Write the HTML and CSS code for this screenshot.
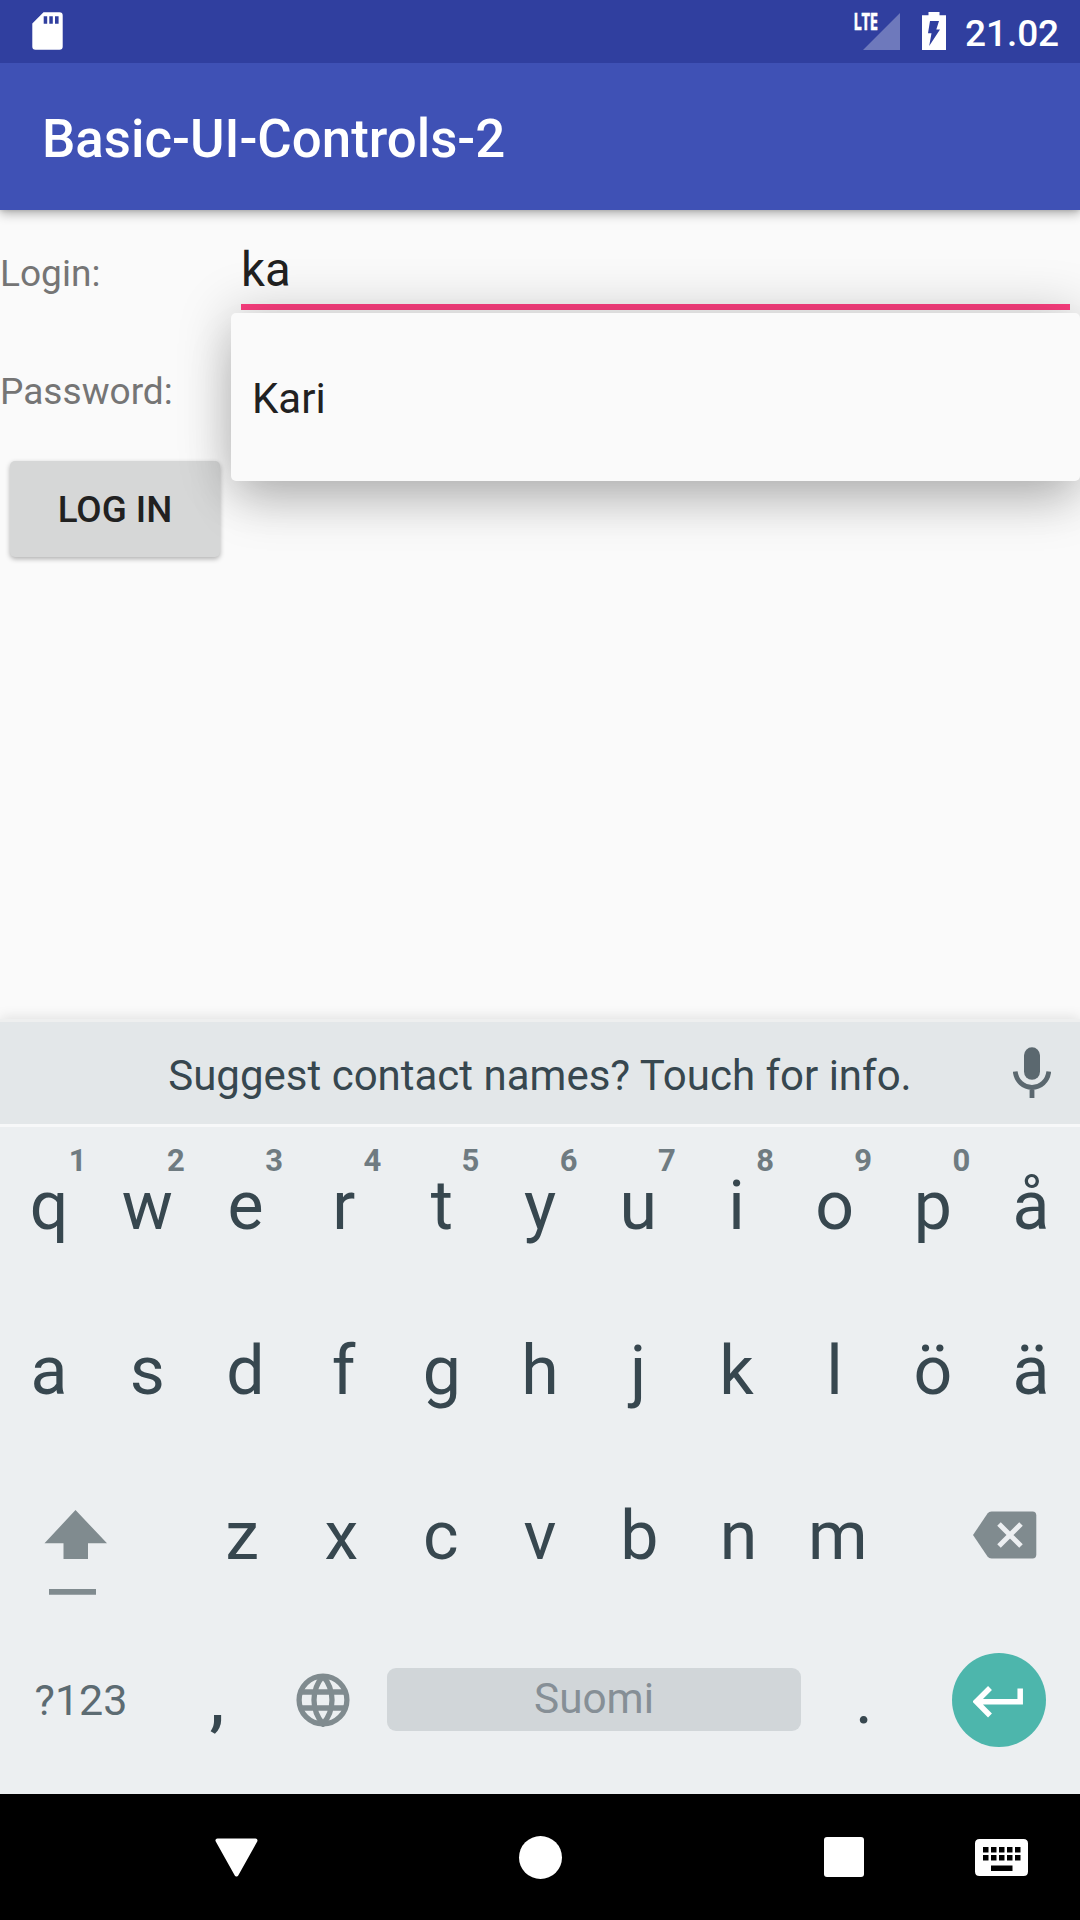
FILE: index.html
```html
<!DOCTYPE html>
<html lang="fi">
<head>
<meta charset="utf-8">
<title>Basic-UI-Controls-2</title>
<link rel="stylesheet" href="styles.css">
</head>
<body>
<div class="screen">
  <header class="status-bar">
    <svg class="sd-icon" width="31" height="38" viewBox="0 0 31 38"><path fill="#fff" fill-rule="evenodd" d="M11.500 .3H27.500a3.200 3.200 0 0 1 3.200 3.200V34.500a3.200 3.200 0 0 1-3.200 3.200H3.500a3.200 3.200 0 0 1-3.200-3.200V11.500ZM11.700 4.200V11.800H15.200V4.200ZM17.300 4.200V11.800H20.800V4.200ZM23 4.200V11.800H26.600V4.200Z"/></svg>
    <div class="status-right">
      <div class="signal">
        <svg width="37" height="37" viewBox="0 0 37 37"><path fill="#fff" fill-opacity=".3" d="M37 0V37H0Z"/></svg>
        <span class="lte">LTE</span>
      </div>
      <svg class="battery" width="24" height="38" viewBox="0 0 24 38"><path fill="#fff" fill-rule="evenodd" d="M6.500 0H17.500V3.200H24V38H0V3.200H6.500ZM8 9H17L14.300 17.500H18L7.200 34L9.500 21.300H6Z"/></svg>
      <span class="clock">21.02</span>
    </div>
  </header>
  <div class="app-bar"><h1 class="title">Basic-UI-Controls-2</h1></div>
  <main class="content">
    <div class="form-row">
      <label class="label">Login:</label>
      <div class="input">ka</div>
      <div class="dropdown">Kari</div>
    </div>
    <div class="form-row"><label class="label">Password:</label></div>
    <button class="login-button">LOG IN</button>
  </main>
  <section class="ime">
    <div class="suggestions">
      <span class="suggestion">Suggest contact names? Touch for info.</span>
      <svg class="mic" width="38" height="52" viewBox="0 0 38 52"><rect x="11" y=".3" width="16" height="32.500" rx="8" fill="#5b686f"/><path d="M2.200 24.500c1.300 10 8.300 15.800 16.800 15.800S34.500 34.500 35.800 24.500M19 40V51" fill="none" stroke="#5b686f" stroke-width="4.800"/></svg>
    </div>
    <div class="keyboard">
      <div class="row row-first">
        <span class="key">q<sup class="hint">1</sup></span><span class="key">w<sup class="hint">2</sup></span><span class="key">e<sup class="hint">3</sup></span><span class="key">r<sup class="hint">4</sup></span><span class="key">t<sup class="hint">5</sup></span><span class="key">y<sup class="hint">6</sup></span><span class="key">u<sup class="hint">7</sup></span><span class="key">i<sup class="hint">8</sup></span><span class="key">o<sup class="hint">9</sup></span><span class="key">p<sup class="hint">0</sup></span><span class="key">å</span>
      </div>
      <div class="row">
        <span class="key">a</span><span class="key">s</span><span class="key">d</span><span class="key">f</span><span class="key">g</span><span class="key">h</span><span class="key">j</span><span class="key">k</span><span class="key">l</span><span class="key">ö</span><span class="key">ä</span>
      </div>
      <div class="row row-third">
        <span class="shift"><svg width="64" height="86" viewBox="0 0 64 86"><path fill="#808b8f" d="M31.500 0L63 33.300H44V49H19.500V33.300H.500ZM5 79H52V84.800H5Z"/></svg></span>
        <span class="key">z</span><span class="key">x</span><span class="key">c</span><span class="key">v</span><span class="key">b</span><span class="key">n</span><span class="key">m</span>
        <span class="backspace"><svg width="64" height="48" viewBox="0 0 64 48"><path fill="#808b8f" d="M0 24L14.500 2.500Q16 .5 18.500 .5H59.500Q63.300 .5 63.300 4.500V43.500Q63.300 47.500 59.500 47.500H18.500Q16 47.500 14.500 45.500Z"/><path d="M26 13L48 35M48 13L26 35" stroke="#eceff1" stroke-width="5"/></svg></span>
      </div>
      <div class="row row-last">
        <span class="key symbols">?123</span>
        <span class="key comma">,</span>
        <span class="globe"><svg width="54" height="54" viewBox="0 0 54 54" fill="none" stroke="#808b8f" stroke-width="5.300"><circle cx="27" cy="27" r="23.900"/><path d="M5 19H49M5 35H49M27 3C15 17 15 37 27 51C39 37 39 17 27 3"/></svg></span>
        <span class="space">Suomi</span>
        <span class="key period">.</span>
        <span class="enter"><svg width="50" height="32" viewBox="0 0 50 32"><path d="M47.200 2.500V15.700H3.500M17 2L3.300 15.700L17 29.500" fill="none" stroke="#fff" stroke-width="5.500"/></svg></span>
      </div>
    </div>
  </section>
  <nav class="nav-bar">
    <svg width="43" height="39" viewBox="0 0 43 39"><path d="M2.500 2.500H40.500L21.500 36.500Z" fill="#fff" stroke="#fff" stroke-width="4" stroke-linejoin="round"/></svg>
    <span class="home"></span>
    <span class="recents"></span>
    <svg width="53" height="37" viewBox="0 0 53 37"><path fill="#fff" fill-rule="evenodd" d="M4.500 0H48.500Q53 0 53 4.500V32.500Q53 37 48.500 37H4.500Q0 37 0 32.500V4.500Q0 0 4.500 0ZM8 8V13.500H13.500V8ZM16 8V13.500H21.500V8ZM24 8V13.500H29.500V8ZM32 8V13.500H37.500V8ZM40 8V13.500H45.500V8ZM8 16V21.500H13.500V16ZM16 16V21.500H21.500V16ZM24 16V21.500H29.500V16ZM32 16V21.500H37.500V16ZM40 16V21.500H45.500V16ZM16 26.500V32H37.500V26.500Z"/></svg>
  </nav>
</div>
</body>
</html>
```
FILE: styles.css
```css
* { box-sizing: border-box; }
body { margin: 0; font-family: Roboto, sans-serif; }
svg { display: block; flex: none; }
.screen { width: 1080px; height: 1920px; overflow: hidden; display: flex; flex-direction: column; background: #fafafa; }

.status-bar { flex: none; position: relative; z-index: 1; height: 63px; background: #303f9f; color: #fff; display: flex; justify-content: space-between; align-items: flex-start; padding: 12px 21px 0 32px; }
.status-right { display: flex; }
.signal { position: relative; width: 37px; padding-top: 1px; margin-right: 22px; }
.lte { position: absolute; right: 22px; top: -1px; font: 700 23px/20px "Open Sans", sans-serif; transform: scaleX(.64); transform-origin: right; -webkit-text-stroke: .5px #fff; letter-spacing: -.5px; }
.clock { margin-left: 19px; font-size: 37px; font-weight: 500; line-height: 43px; letter-spacing: -.1px; }

.app-bar { flex: none; position: relative; height: 147px; padding: 4px 42px 0; display: flex; align-items: center; background: #3f51b5; box-shadow: 0 4px 10px rgba(0,0,0,.28), 0 1px 4px rgba(0,0,0,.12); }
.title { margin: 0; color: #fff; font-size: 52.8px; font-weight: 500; line-height: 60px; }

.content { flex: 1; }
.form-row { position: relative; display: flex; height: 118px; }
.label { width: 241px; line-height: 127px; font-size: 37.1px; color: #757575; }
.input { width: 829px; height: 100px; padding-top: 1px; border-bottom: 6px solid #ff4081; font-size: 47.25px; line-height: 119px; color: #212121; }
.dropdown { position: absolute; z-index: 2; left: 231px; top: 103px; width: 849px; height: 168px; padding-left: 21px; border-radius: 5px; background: #fafafa; color: #212121; font-size: 42px; line-height: 171px; box-shadow: 0 0 54px rgba(0,0,0,.22), 0 28px 46px -6px rgba(0,0,0,.18); }
.login-button { display: block; margin: 14.5px 0 0 10px; width: 210px; height: 96.5px; padding: 2px 0 0; border: 0; border-radius: 5px; background: #d6d7d7; color: #212121; font: 500 36.75px/43px Roboto, sans-serif; box-shadow: 0 2px 5px rgba(0,0,0,.3); }

.ime { flex: none; height: 775px; display: flex; flex-direction: column; border-top: 3px solid #eeefef; background: #eceff1; box-shadow: 0 -2px 12px rgba(0,0,0,.1); }
.suggestions { flex: none; height: 105px; display: grid; grid-template-columns: 1fr auto 1fr; align-items: center; background: #e3e7e9; border-bottom: 3px solid #f7f8f9; }
.suggestion { grid-column: 2; padding-top: 5px; font-size: 42px; line-height: 50px; color: #37474f; }
.mic { justify-self: end; margin-right: 29px; }
.keyboard { flex: none; height: 667px; display: grid; grid-template-rows: 161px 165px 165px 176px; }
.row { display: flex; align-items: center; }
.row-first { padding-bottom: 4px; }
.key { position: relative; flex: 1; text-align: center; font-size: 68px; line-height: 80px; color: #37474f; }
.hint { position: absolute; left: 68%; width: 22px; top: -18px; font-size: 31px; font-weight: 700; line-height: 26px; color: #6f7b81; }
.shift { width: 192.5px; padding: 35px 0 0 44px; }
.row-third .key { flex: 0 0 99.3px; }
.backspace { padding-left: 85px; margin-top: -2px; }
.row-last { padding-bottom: 13px; }
.key.symbols { flex: 0 0 162px; font-size: 43px; color: #5c6b72; }
.key.comma { flex: 0 0 108px; padding-left: 2px; font-weight: 500; }
.globe { flex: 0 0 117px; padding-left: 26px; }
.space { flex: 0 0 414px; height: 63px; border-radius: 9px; background: #d1d6d9; color: #868f96; font-size: 42.3px; line-height: 61px; text-align: center; }
.key.period { flex: 0 0 125px; padding-left: 1px; padding-top: 1px; }
.enter { width: 94px; height: 94px; margin-left: 26px; padding: 4px 3px 0 0; border-radius: 50%; background: #4db6ac; display: flex; align-items: center; justify-content: center; }

.nav-bar { flex: none; height: 126px; display: flex; align-items: center; background: #000; padding-left: 214.5px; }
.home { width: 43px; height: 43px; margin-left: 261px; border-radius: 50%; background: #fff; }
.recents { width: 40px; height: 40px; margin: 0 111px 0 262.5px; border-radius: 3px; background: #fff; }
```
